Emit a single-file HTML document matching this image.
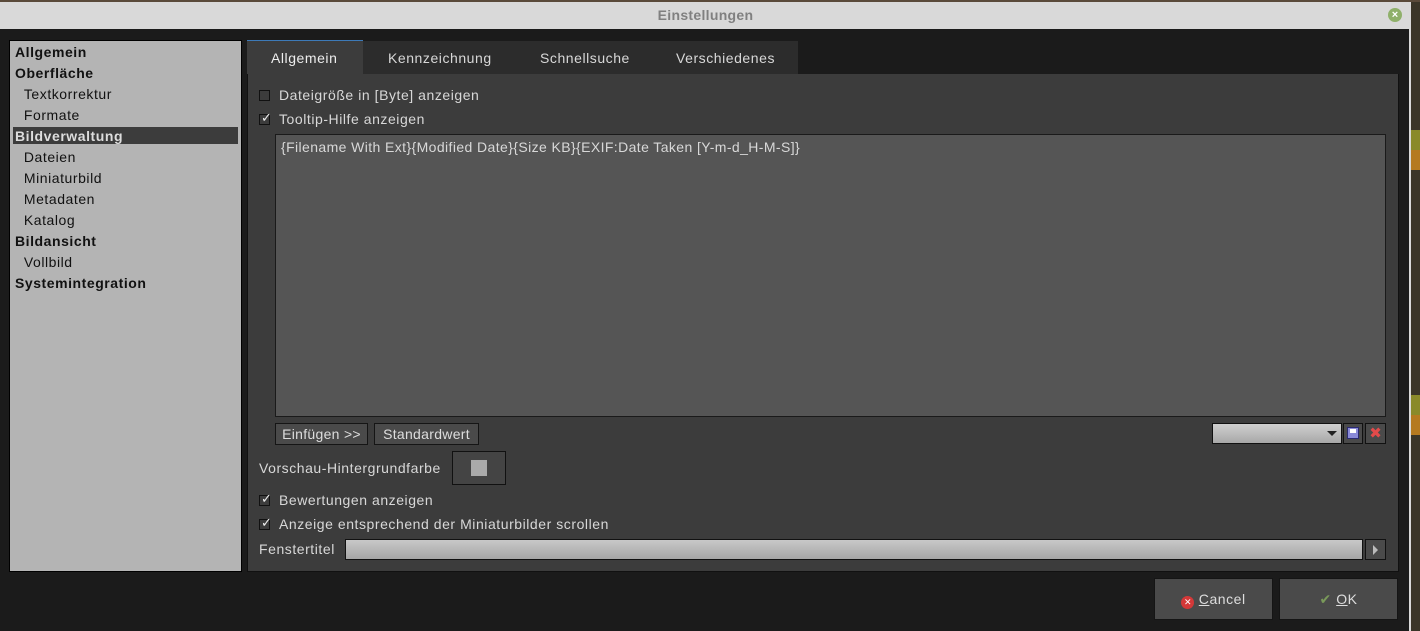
<!DOCTYPE html><html><head><style>
*{margin:0;padding:0;box-sizing:border-box}
body{width:1420px;height:631px;overflow:hidden;background:#3a3528;font-family:"Liberation Sans","DejaVu Sans",sans-serif;font-size:14px;letter-spacing:0.55px;position:relative}
.a{position:absolute;white-space:nowrap}
.t{color:#d8d8d8}
.cb{position:absolute;width:11px;height:11px;border:1px solid #111;background:#3c3c3c}
.ck{position:absolute;color:#eee;font-size:13px;line-height:11px;left:1px;top:-3px}
.btn{position:absolute;border:1px solid #151515;background:#4a4a4a;color:#ddd;text-align:center}
</style></head><body>
<div class="a" style="left:0;top:0;width:1420px;height:2px;background:#5a4a3a"></div>
<div class="a" style="left:0;top:2px;width:1411px;height:27px;background:#d9d9d9"></div>
<div class="a" style="left:0;top:7px;width:1411px;text-align:center;color:#808080;font-weight:bold;font-size:14px;letter-spacing:0.3px">Einstellungen</div>
<div class="a" style="left:1388px;top:8px;width:14px;height:14px;border-radius:50%;background:#8fb06a;color:#fff;font-size:11px;line-height:14px;text-align:center;font-weight:bold;letter-spacing:0">×</div>
<div class="a" style="left:0;top:29px;width:1409px;height:602px;background:#1b1b1b"></div>
<div class="a" style="left:1409px;top:29px;width:2px;height:602px;background:#d9d9d9"></div>
<div class="a" style="left:1411px;top:130px;width:9px;height:20px;background:#8a8a2a"></div>
<div class="a" style="left:1411px;top:150px;width:9px;height:20px;background:#b57a20"></div>
<div class="a" style="left:1411px;top:395px;width:9px;height:20px;background:#8a8a2a"></div>
<div class="a" style="left:1411px;top:415px;width:9px;height:20px;background:#b57a20"></div>
<!-- left list -->
<div class="a" style="left:9px;top:40px;width:233px;height:532px;background:#b4b4b4;border:1px solid #000"></div>
<div class="a" style="left:13px;top:127px;width:225px;height:17px;background:#3c3c3c"></div>
<div class="a" style="left:15px;top:42px;line-height:21px;color:#111">
<b>Allgemein</b><br><b>Oberfläche</b><br>&nbsp;&nbsp;Textkorrektur<br>&nbsp;&nbsp;Formate<br><b style="color:#ddd">Bildverwaltung</b><br>&nbsp;&nbsp;Dateien<br>&nbsp;&nbsp;Miniaturbild<br>&nbsp;&nbsp;Metadaten<br>&nbsp;&nbsp;Katalog<br><b>Bildansicht</b><br>&nbsp;&nbsp;Vollbild<br><b>Systemintegration</b></div>
<!-- tabs -->
<div class="a" style="left:363px;top:41px;width:435px;height:33px;background:#2c2c2c"></div>
<div class="a" style="left:247px;top:40px;width:116px;height:34px;background:#3c3c3c;border-top:1px solid #3d7ab8"></div>
<div class="a t" style="left:271px;top:50px;color:#eee">Allgemein</div>
<div class="a t" style="left:388px;top:50px">Kennzeichnung</div>
<div class="a t" style="left:540px;top:50px">Schnellsuche</div>
<div class="a t" style="left:676px;top:50px">Verschiedenes</div>
<div class="a" style="left:247px;top:74px;width:1152px;height:498px;background:#3c3c3c;border:1px solid #111;border-top:none"></div>
<div class="cb" style="left:259px;top:90px"></div>
<div class="a t" style="left:279px;top:87px">Dateigröße in [Byte] anzeigen</div>
<div class="cb" style="left:259px;top:114px"><span class="ck">✓</span></div>
<div class="a t" style="left:279px;top:111px">Tooltip-Hilfe anzeigen</div>
<div class="a" style="left:275px;top:134px;width:1111px;height:283px;background:#555;border:1px solid #1a1a1a"></div>
<div class="a t" style="left:281px;top:139px;letter-spacing:0.4px">{Filename With Ext}{Modified Date}{Size KB}{EXIF:Date Taken [Y-m-d_H-M-S]}</div>
<div class="btn" style="left:275px;top:423px;width:93px;height:22px;line-height:20px;letter-spacing:0.3px">Einfügen &gt;&gt;</div>
<div class="btn" style="left:374px;top:423px;width:105px;height:22px;line-height:20px;letter-spacing:0.3px">Standardwert</div>
<div class="a" style="left:1212px;top:423px;width:130px;height:21px;background:linear-gradient(#cfcfcf,#a8a8a8);border:1px solid #111"></div>
<div class="a" style="left:1327px;top:431px;width:0;height:0;border-left:5px solid transparent;border-right:5px solid transparent;border-top:5px solid #222"></div>
<div class="a" style="left:1343px;top:423px;width:20px;height:21px;background:#4a4a4a;border:1px solid #111"></div>
<div class="a" style="left:1347px;top:427px;width:12px;height:12px;background:#8a8ad8;border:1px solid #2a2a70"><div style="margin:1px 2px;height:4px;background:#fff"></div></div>
<div class="a" style="left:1365px;top:423px;width:21px;height:21px;background:#4a4a4a;border:1px solid #111;color:#e24a4a;font-weight:bold;text-align:center;line-height:19px;font-size:15px;letter-spacing:0">✖</div>
<div class="a t" style="left:259px;top:460px">Vorschau-Hintergrundfarbe</div>
<div class="a" style="left:452px;top:451px;width:54px;height:34px;background:#444;border:1px solid #111"></div>
<div class="a" style="left:471px;top:460px;width:16px;height:16px;background:#aaa"></div>
<div class="cb" style="left:259px;top:495px"><span class="ck">✓</span></div>
<div class="a t" style="left:279px;top:492px">Bewertungen anzeigen</div>
<div class="cb" style="left:259px;top:519px"><span class="ck">✓</span></div>
<div class="a t" style="left:279px;top:516px">Anzeige entsprechend der Miniaturbilder scrollen</div>
<div class="a t" style="left:259px;top:541px">Fenstertitel</div>
<div class="a" style="left:345px;top:539px;width:1018px;height:21px;background:linear-gradient(#c8c8c8,#a6a6a6);border:1px solid #111"></div>
<div class="a" style="left:1365px;top:539px;width:21px;height:21px;background:#4a4a4a;border:1px solid #111"></div>
<div class="a" style="left:1373px;top:545px;width:0;height:0;border-top:5px solid transparent;border-bottom:5px solid transparent;border-left:5px solid #bbb"></div>
<div class="btn" style="left:1154px;top:578px;width:119px;height:42px;line-height:40px"><span style="display:inline-block;width:13px;height:13px;border-radius:50%;background:#d43838;color:#fff;font-size:9px;line-height:13px;vertical-align:-1px;font-weight:bold;letter-spacing:0">✕</span> <u>C</u>ancel</div>
<div class="btn" style="left:1279px;top:578px;width:119px;height:42px;line-height:40px"><span style="color:#7a9a5a;font-weight:bold">✔</span> <u>O</u>K</div>
</body></html>
